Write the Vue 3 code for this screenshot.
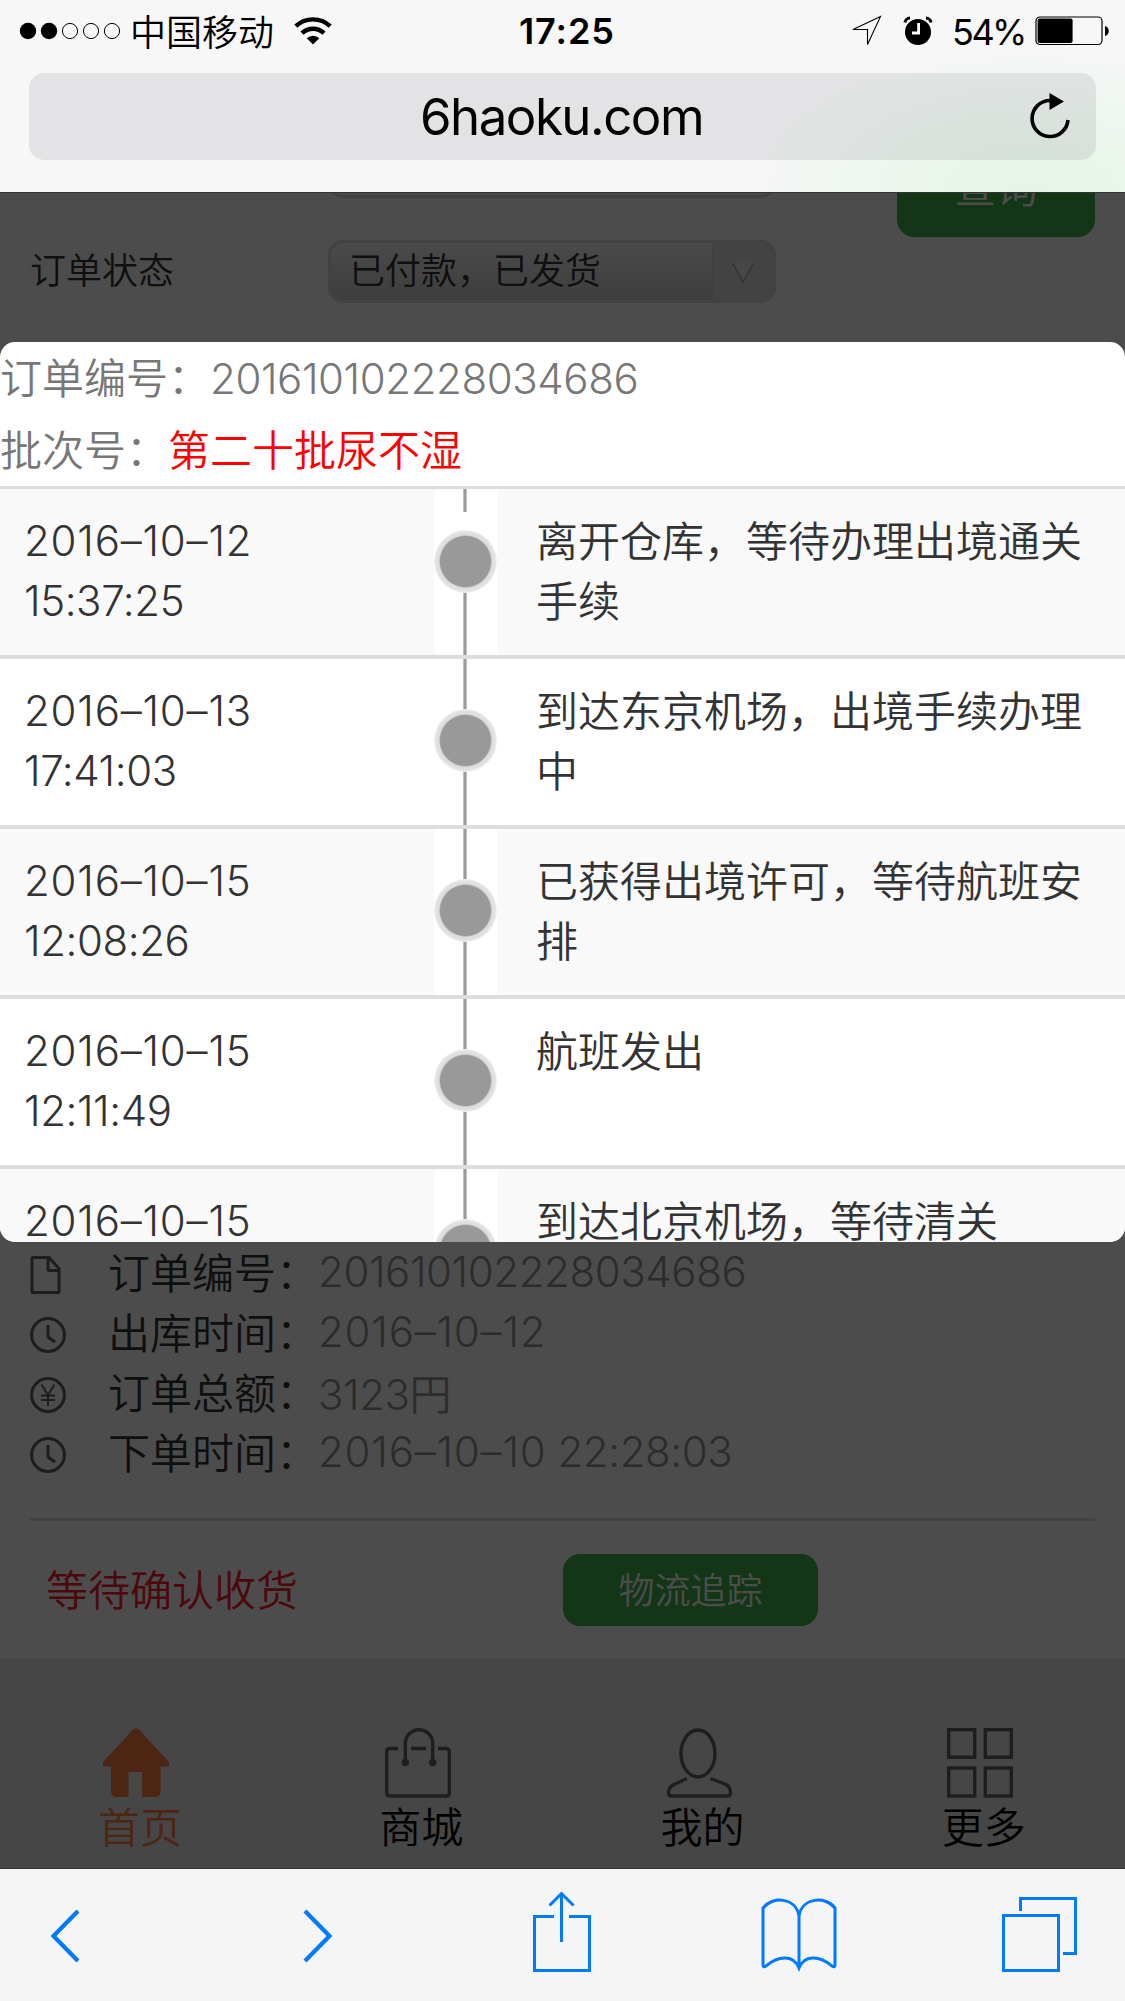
<template>
  <div class="screen">
    <header class="browser-top">
      <div class="status-bar">
        <div class="status-left">
          <svg class="signal" width="102" height="18" viewBox="0 0 102 18">
            <circle v-for="n in 5" :key="n" :cx="9 + (n - 1) * 21" cy="9" :r="n < 3 ? 8.2 : 7.6" :fill="n < 3 ? '#000' : 'none'" stroke="#000" :stroke-width="n < 3 ? 0 : 1" />
          </svg>
          <span class="carrier">中国移动</span>
          <svg class="wifi" width="38" height="28" viewBox="0 0 38 28">
            <path d="M1.8 9.2a25 25 0 0 1 34.4 0" fill="none" stroke="#000" stroke-width="4.4" />
            <path d="M8 16.2a16 16 0 0 1 22 0" fill="none" stroke="#000" stroke-width="4.4" />
            <path d="M12.7 21.3a9 9 0 0 1 12.6 0L19 27.6z" />
          </svg>
        </div>
        <span class="time">17:25</span>
        <div class="status-right">
          <svg class="location" width="32" height="32" viewBox="0 0 32 32">
            <path d="M29.5 1.5L2 14.5h14.5V29.5z" fill="none" stroke="#000" stroke-width="1.1" />
          </svg>
          <svg class="alarm" width="30" height="30" viewBox="0 0 30 30">
            <circle cx="15" cy="16" r="13" />
            <path d="M2 6.5a5 5 0 0 1 5-4.5M28 6.5a5 5 0 0 0-5-4.5" fill="none" stroke="#000" stroke-width="3" />
            <path d="M15.6 7v10H9" fill="none" stroke="#fff" stroke-width="2.8" />
          </svg>
          <span class="percent">54%</span>
          <svg class="battery" width="74" height="30" viewBox="0 0 74 30">
            <rect x="1" y="1" width="66" height="27.5" rx="4" fill="none" stroke="#000" stroke-width="1.2" />
            <rect x="2.6" y="2.6" width="35" height="24.4" rx="2" />
            <path d="M70 10c5 1 5 9 0 10z" />
          </svg>
        </div>
      </div>
      <div class="address-bar">
        <span>6haoku.com</span>
        <svg class="reload" width="42" height="50" viewBox="0 0 42 50">
          <path d="M39 28a18 18 0 1 1-18-19.5" fill="none" stroke="#000" stroke-width="3.6" />
          <path d="M20.5 1v17l14.5-8.5z" />
        </svg>
      </div>
    </header>

    <main class="viewport">
      <section class="search">
        <div class="search-top">
          <div class="input"></div>
          <button class="btn btn-query">查询</button>
        </div>
        <div class="field">
          <label>订单状态</label>
          <div class="select">
            <span class="select-value">已付款，已发货</span>
            <span class="select-arrow">
              <svg width="24" height="24" viewBox="0 0 24 24">
                <path d="M2 1h20l-10 20z" fill="#fff" fill-opacity=".5" />
                <path d="M2 4l10 18L22 4" fill="none" stroke="#aaa" stroke-width="1.4" />
              </svg>
            </span>
          </div>
        </div>
      </section>

      <section class="order">
        <div v-for="item in details" :key="item.label" class="order-line">
          <svg class="order-icon" width="38" height="40" viewBox="0 0 38 40" fill="none" stroke="#626262" stroke-width="3">
            <path v-if="item.icon === 'doc'" d="M2 3.5q0-1 1-1h16l10 11v23q0 1-1 1H3q-1 0-1-1zM18 3v11.5q0 1 1 1h10" />
            <template v-else>
              <circle cx="18" cy="20" r="16.4" />
              <path v-if="item.icon === 'clock'" d="M18 10v12l7 5" />
              <path v-else d="M11.5 9.5L18 20l6.500-10.500M18 20v11M11 20.500h14M11 25h14" stroke-width="2" />
            </template>
          </svg>
          <span class="order-label">{{ item.label }}：</span>
          <span class="order-value">
            <span v-if="item.date" class="date">{{ item.date }}</span>
            <span v-if="item.value" class="num">{{ item.value }}</span>
          </span>
        </div>
        <div class="order-footer">
          <span class="order-state">等待确认收货</span>
          <button class="btn btn-track">物流追踪</button>
        </div>
      </section>

      <nav class="tabs">
        <a class="tab active">
          <svg width="66" height="70" viewBox="0 0 66 70">
            <path d="M29.5 2q3.500-3.500 7 0L65 33q2 3 .5 5.500h-8V64q0 5-6 5H39V44H25.500v25H14q-6 0-6-6V38.500H.5q-1.500-3 .5-5.500z" fill="#ff7f40" />
          </svg>
          <span>首页</span>
        </a>
        <a class="tab">
          <svg width="66" height="70" viewBox="0 0 66 70" fill="none" stroke="#666" stroke-width="3.4">
            <path d="M13 20.500H5q-3.300 0-3.300 3.300V65q0 3 3 3h56.600q3 0 3-3V23.800q0-3.300-3.300-3.300h-8M26 20.500h15" />
            <path d="M20.300 34V15.500a13.700 13.700 0 0 1 27.400 0V34" />
            <circle cx="20.300" cy="34.500" r="2" /><circle cx="47.700" cy="34.500" r="2" />
          </svg>
          <span>商城</span>
        </a>
        <a class="tab">
          <svg width="66" height="70" viewBox="0 0 66 70" fill="none" stroke="#666" stroke-width="3.4">
            <ellipse cx="32" cy="25.500" rx="17" ry="23.500" />
            <path d="M21 50.500L7 57q-4.500 2.500-4.500 8 0 3 3 3h56q3 0 3-3 0-6-4.500-8.500L44.500 50.500" />
          </svg>
          <span>我的</span>
        </a>
        <a class="tab">
          <svg width="66" height="70" viewBox="0 0 66 70" fill="none" stroke="#666" stroke-width="3.4">
            <rect x="1.700" y="1.700" width="26" height="27.500" /><rect x="38.300" y="1.700" width="26" height="27.500" />
            <rect x="1.700" y="40" width="26" height="28" /><rect x="38.300" y="40" width="26" height="28" />
          </svg>
          <span>更多</span>
        </a>
      </nav>

      <div class="overlay">
        <div class="dialog">
          <div class="dialog-head">
            <p>订单编号：<span class="num">201610102228034686</span></p>
            <p>批次号：<span class="batch">第二十批尿不湿</span></p>
          </div>
          <div v-for="(log, i) in logs" :key="i" class="log" :class="{ first: i === 0 }">
            <div class="log-time">
              <span class="date">{{ log.date }}</span>
              <span class="num">{{ log.time }}</span>
            </div>
            <div class="log-axis"><i class="dot"></i></div>
            <div class="log-text">{{ log.text }}</div>
          </div>
        </div>
      </div>
    </main>

    <footer class="browser-bottom">
      <svg class="ic-back" width="32" height="56" viewBox="0 0 32 56"><path d="M29 3L4.500 28 29 53" /></svg>
      <svg class="ic-forward" width="32" height="56" viewBox="0 0 32 56"><path d="M3 3l24.500 25L3 53" /></svg>
      <svg class="ic-share" width="58" height="82" viewBox="0 0 58 82">
        <path d="M21 25.500H1.500v54h55v-54H36M28.500 51V3M16.500 14.500l12-12 12 12" />
      </svg>
      <svg class="ic-book" width="76" height="74" viewBox="0 0 76 74">
        <path d="M38 70V18C35 -1 11 -2 2 10V67q0 3 3 1C18 57 33 57 38 70 43 57 58 57 71 68q3 2 3-1V10C65 -2 41 -1 38 18" />
      </svg>
      <svg class="ic-pages" width="76" height="76" viewBox="0 0 76 76">
        <path d="M1.500 18.500h55v55h-55zM18.500 14V1.500h55v55H61" />
      </svg>
    </footer>
  </div>
</template>

<script setup>
const details = [
  { icon: 'doc', label: '订单编号', value: '201610102228034686' },
  { icon: 'clock', label: '出库时间', date: '2016–10–12' },
  { icon: 'yen', label: '订单总额', value: '3123円' },
  { icon: 'clock', label: '下单时间', date: '2016–10–10', value: '22:28:03' }
]

const logs = [
  { date: '2016–10–12', time: '15:37:25', text: '离开仓库，等待办理出境通关手续' },
  { date: '2016–10–13', time: '17:41:03', text: '到达东京机场，出境手续办理中' },
  { date: '2016–10–15', time: '12:08:26', text: '已获得出境许可，等待航班安排' },
  { date: '2016–10–15', time: '12:11:49', text: '航班发出' },
  { date: '2016–10–15', time: '', text: '到达北京机场，等待清关' }
]
</script>

<style>
body {
  margin: 0;
}
</style>

<style scoped>
.screen {
  width: 1125px;
  height: 2001px;
  display: flex;
  flex-direction: column;
  overflow: hidden;
  font-family: Inter, "Noto Sans CJK SC", sans-serif;
  font-weight: 350;
  font-size: 42px;
  color: #333;
}

.num {
  letter-spacing: -0.4px;
}

.date {
  letter-spacing: 0.8px;
}

/* 浏览器顶部 */
.browser-top {
  height: 192px;
  box-sizing: border-box;
  flex: none;
  color: #000;
  background: radial-gradient(ellipse 290px 150px at 1030px 192px, #e6f4e6 0%, #ecf6ed 45%, rgba(247, 247, 247, 0) 100%) #f7f7f7;
}

.status-bar {
  height: 73px;
  display: grid;
  grid-template-columns: 519px 1fr 511px;
  font-size: 36px;
}

.status-left,
.status-right {
  display: flex;
  align-items: center;
  height: 61px;
}

.status-bar svg {
  flex: none;
}

.signal {
  margin-left: 19px;
}

.carrier {
  margin: -2px 0 0 9px;
}

.wifi {
  margin-left: 20px;
}

.time {
  font-weight: 600;
  line-height: 62px;
  letter-spacing: 0.9px;
  white-space: nowrap;
}

.status-right {
  justify-content: flex-end;
}

.alarm {
  margin-left: 20px;
}

.percent {
  margin: 2px 10px 0 19px;
  font-weight: 400;
  letter-spacing: -2.6px;
}

.battery {
  margin-right: 17px;
}

.address-bar {
  height: 87px;
  margin: 0 29px;
  border-radius: 15px;
  background: rgba(20, 20, 50, 0.085);
  display: grid;
  grid-template-columns: 1fr auto 1fr;
  align-items: center;
  font-size: 51px;
  font-weight: 400;
}

.address-bar span {
  grid-column: 2;
  margin: -1px 2px 0 0;
  letter-spacing: -1.5px;
}

.reload {
  justify-self: end;
  margin-right: 25px;
}

/* 页面内容 */
.viewport {
  position: relative;
  height: 1677px;
  flex: none;
  overflow: hidden;
  background: #fff;
  display: flex;
  flex-direction: column;
}

.search-top {
  height: 45px;
  display: flex;
  justify-content: space-between;
  align-items: flex-end;
  padding: 0 30px 0 328px;
}

.input {
  width: 448px;
  height: 60px;
  margin-bottom: 39px;
  box-sizing: border-box;
  border: 3px solid #dcdcdc;
  border-radius: 15px;
}

.btn {
  border: none;
  padding: 0;
  color: #fff;
  font-family: inherit;
  font-weight: inherit;
  background: #3fb44a;
  border-radius: 17px;
}

.btn-query {
  width: 198px;
  height: 96px;
  padding-bottom: 10px;
  font-size: 42px;
}

.field {
  display: flex;
  align-items: center;
  margin-top: 3px;
  padding-left: 30px;
  font-size: 36px;
}

.field label {
  width: 298px;
  margin-top: -8px;
}

.select {
  width: 448px;
  height: 63px;
  box-sizing: border-box;
  border: 3px solid #dcdcdc;
  border-radius: 15px;
  overflow: hidden;
  display: flex;
  background: linear-gradient(#f8f8f8, #cfcfcf);
}

.select-value {
  flex: 1;
  padding-left: 18px;
  line-height: 57px;
}

.select-arrow {
  width: 60px;
  display: flex;
  align-items: center;
  justify-content: center;
  background: #dfdfdf;
  border-left: 1px solid #d2d2d2;
}

.order {
  margin-top: 939px;
  padding: 0 30px;
  height: 417px;
  flex: none;
}

.order-line {
  display: flex;
  align-items: center;
  height: 60px;
}

.order-icon {
  margin: 6px 40px 0 0;
}

.order-label {
  width: 210px;
  margin-top: -4px;
  white-space: nowrap;
}

.order-value {
  display: flex;
  gap: 11px;
  margin-top: -1px;
  color: #939393;
}

.order-footer {
  display: flex;
  align-items: center;
  margin-top: 36px;
  border-top: 3px solid #dcdcdc;
  height: 138px;
}

.order-state {
  width: 517px;
  margin-top: -5px;
  padding-left: 16px;
  color: #ff2028;
}

.btn-track {
  width: 255px;
  height: 72px;
  padding-bottom: 4px;
  font-size: 36px;
}

.tabs {
  flex: none;
  height: 209px;
  display: grid;
  grid-template-columns: repeat(4, 1fr);
  background: #eaeaea;
}

.tab {
  display: flex;
  flex-direction: column;
  align-items: center;
  padding-top: 69px;
  color: #000;
}

.tab svg {
  margin-right: 8px;
}

.tab.active svg {
  margin-right: 9px;
}

.tab span {
  margin-right: 1px;
  line-height: 60px;
}

.tab.active {
  color: #ff7f40;
}

.overlay {
  position: absolute;
  inset: 0;
  background: rgba(0, 0, 0, 0.7);
  border-top: 1px solid #333;
  border-bottom: 1px solid #333;
}

.dialog {
  margin-top: 149px;
  height: 900px;
  border-radius: 15px;
  overflow: hidden;
  background: #fff;
}

.dialog-head {
  height: 143px;
  padding-top: 1px;
  border-bottom: 3px solid #ddd;
  color: #777;
}

.dialog-head p {
  margin: 0;
  line-height: 72px;
}

.batch {
  color: #f00;
}

.log {
  display: flex;
  height: 166px;
  border-bottom: 4px solid #ddd;
  line-height: 60px;
}

.log:nth-child(even) {
  background: #f9f9f9;
}

.log-time {
  width: 410px;
  padding: 22px 0 0 24px;
  display: flex;
  flex-direction: column;
}

.log-axis {
  width: 63px;
  display: flex;
  justify-content: center;
  background: linear-gradient(90deg, transparent 29px, #c0c0c0 29px, #c0c0c0 30px, #9b9b9b 30px, #9b9b9b 32px, #c0c0c0 32px, #c0c0c0 33px, transparent 33px) #fff;
}

.dot {
  width: 63px;
  height: 63px;
  flex: none;
  margin-top: 50px;
  border-radius: 50%;
  background: radial-gradient(circle closest-side, #999 25px, #dcdcdc 26.5px, #e2e2e2 29.5px, #f2f2f2 31.5px);
}

.first .dot {
  margin-top: 41px;
}

/* 起点圆点上方留白 */
.first .log-axis {
  background:
    linear-gradient(#fff, #fff) 0 23px / 63px 20px no-repeat,
    linear-gradient(90deg, transparent 29px, #c0c0c0 29px, #c0c0c0 30px, #9b9b9b 30px, #9b9b9b 32px, #c0c0c0 32px, #c0c0c0 33px, transparent 33px) #fff;
}

.log-text {
  width: 560px;
  padding: 23px 0 0 39px;
}

/* 浏览器底部工具栏 */
.browser-bottom {
  flex: 1;
  background: #f5f5f5;
  display: flex;
}

.browser-bottom path {
  fill: none;
  stroke: #007aff;
  stroke-width: 3;
}

.ic-back {
  margin: 39px 0 0 49px;
}

.ic-forward {
  margin: 39px 0 0 221px;
}

.ic-back path,
.ic-forward path {
  stroke-width: 4.2;
}

.ic-share {
  margin: 22px 0 0 199px;
}

.ic-book {
  margin: 29px 0 0 170px;
}

.ic-pages {
  margin: 28px 0 0 165px;
}
</style>
